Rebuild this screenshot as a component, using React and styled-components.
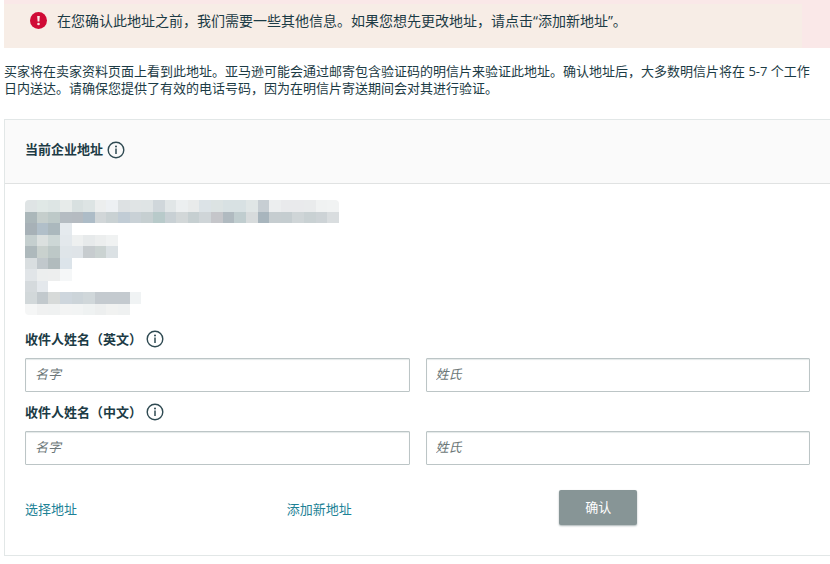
import React, { useState } from "react";
import styled, { createGlobalStyle } from "styled-components";

// cell colours of the hidden address, one array per row
const MOSAIC = [
  ["#dfe4e5", "#e0e8e6", "#dde5e4", "#e7ebea", "#d8e0e0", "#dde4e4", "#eceeee", "#edf0f3", "#dde1e3", "#e0e4e5", "#dfe4e5", "#d0d7db", "#e1e6e7", "#eceff0", "#e9ebeb", "#dce3e7", "#dce3e3", "#d8e1e3", "#d8e1e3", "#e0e6e6", "#c7ced3", "#eceeef", "#e9eaec", "#e9eaec", "#e9ebec", "#f0f2f2", "#f1f3f3"],
  ["#abb7ba", "#c5cecc", "#bdc9c8", "#b5bcc2", "#b5bbc1", "#adbcc7", "#d1d6d8", "#c9d1d3", "#c1ccd5", "#c9d1d6", "#c6cfd1", "#b8caca", "#c8d0d4", "#d2d7d8", "#c6cfd1", "#cfd5d8", "#c5c6ca", "#b0bac0", "#c0cdcf", "#d7dbdc", "#a8b5bd", "#c6cdd0", "#c5cdd0", "#cfd5d7", "#c9d1d3", "#cdd3d6", "#d9dddf"],
  ["#a7b1b7", "#b1bfc9", "#abb8bd", "#e5eaee"],
  ["#c5cfcf", "#dbe0df", "#cdd7d6", "#e3e8ec", "#eef0f0", "#e7eaeb", "#eceeee", "#f0f2f2"],
  ["#aeb9bc", "#c9d1ce", "#bdc8c7", "#dfe5e9", "#dfe4e8", "#c7cccf", "#cbd3d2", "#dbe1e4"],
  ["#d9dee0", "#c1c8cc", "#b1bbbd", "#dce4ea"],
  ["#e1e5e8", "#eceeee", "#edeeee", "#f5f7f8"],
  ["#d5dadd", "#e4e8ec"],
  ["#d2d8da", "#c2c9cd", "#d7dad9", "#ced6dd", "#ccd4d9", "#d0d7da", "#c4cacf", "#c4cacf", "#c4cacf", "#f0f3f4"],
  ["#f5f6f6", "#f0f1f1", "#eff1f1", "#f3f4f4", "#f2f4f4", "#eff2f2", "#edefef", "#f1f2f1", "#eff1f1"],
];

const NAME_GROUPS = [
  { id: "en", title: "收件人姓名（英文）" },
  { id: "cn", title: "收件人姓名（中文）" },
];

function InfoIcon() {
  return (
    <svg width="18" height="18" viewBox="0 0 18 18" fill="none">
      <circle cx="9" cy="9" r="7.8" stroke="#2f4a52" strokeWidth="1.4" />
      <circle cx="9" cy="5.4" r="1" fill="#2f4a52" />
      <path d="M9 7.6V13" stroke="#2f4a52" strokeWidth="1.5" />
    </svg>
  );
}

function AlertIcon() {
  return (
    <svg width="17" height="17" viewBox="0 0 17 17">
      <circle cx="8.5" cy="8.5" r="8.5" fill="#d00b36" />
      <path d="M7.2 4h2.6l-.4 5.4H7.6z" fill="#fbe9e9" />
      <circle cx="8.5" cy="12" r="1.3" fill="#fbe9e9" />
    </svg>
  );
}

function HiddenAddress() {
  return (
    <Mosaic viewBox="0 0 27 10" preserveAspectRatio="none" shapeRendering="crispEdges">
      {MOSAIC.map((row, y) =>
        row.map((color, x) => (
          <rect key={`${x}-${y}`} x={x} y={y} width="1" height="1" fill={color} />
        ))
      )}
    </Mosaic>
  );
}

function App() {
  const [values, setValues] = useState({});

  function handleChange(e) {
    setValues({ ...values, [e.target.name]: e.target.value });
  }

  return (
    <Page>
      <GlobalStyle />

      <Alert role="alert">
        <AlertIcon />
        <span>
          在您确认此地址之前，我们需要一些其他信息。如果您想先更改地址，请点击“添加新地址”。
        </span>
      </Alert>

      <Description>
        买家将在卖家资料页面上看到此地址。亚马逊可能会通过邮寄包含验证码的明信片来验证此地址。确认地址后，大多数明信片将在 5-7 个工作日内送达。请确保您提供了有效的电话号码，因为在明信片寄送期间会对其进行验证。
      </Description>

      <Card>
        <CardHeader>
          <Title>当前企业地址</Title>
          <InfoButton type="button" aria-label="当前企业地址">
            <InfoIcon />
          </InfoButton>
        </CardHeader>

        <CardBody>
          <HiddenAddress />

          {NAME_GROUPS.map(({ id, title }) => (
            <NameGroup key={id}>
              <LabelRow>
                <Label htmlFor={`first-${id}`}>{title}</Label>
                <InfoButton type="button" aria-label={title}>
                  <InfoIcon />
                </InfoButton>
              </LabelRow>
              <Fields>
                <Input
                  id={`first-${id}`}
                  name={`first-${id}`}
                  placeholder="名字"
                  value={values[`first-${id}`] || ""}
                  onChange={handleChange}
                />
                <Input
                  name={`last-${id}`}
                  aria-label="姓氏"
                  placeholder="姓氏"
                  value={values[`last-${id}`] || ""}
                  onChange={handleChange}
                />
              </Fields>
            </NameGroup>
          ))}

          <Actions>
            <Link href="#select">选择地址</Link>
            <Link href="#new">添加新地址</Link>
            <ButtonCell>
              <Button type="button">确认</Button>
            </ButtonCell>
          </Actions>
        </CardBody>
      </Card>
    </Page>
  );
}

const GlobalStyle = createGlobalStyle`
  * {
    box-sizing: border-box;
  }

  body {
    margin: 0;
    background: #fff;
    color: #1c3b45;
    font-family: "Open Sans", "Noto Sans CJK SC", sans-serif;
    font-size: 13px;
    line-height: 17px;
  }
`;

const Page = styled.main`
  padding-left: 4px;
`;

const Alert = styled.div`
  display: flex;
  align-items: flex-start;
  gap: 10px;
  min-height: 48px;
  padding: 12px 26px 0;
  background: linear-gradient(#f7ede6, #f7ede6) 0 4px / calc(100% - 28px) 100% no-repeat #fae8e8;
  font-size: 14px;
`;

const Description = styled.p`
  margin: 15px 0 22px;
  padding-right: 8px;
`;

const Card = styled.section`
  border: 1px solid #e2e7e7;
  border-right: none;
`;

const CardHeader = styled.header`
  display: flex;
  align-items: center;
  gap: 4px;
  height: 64px;
  padding: 0 20px 4px;
  border-bottom: 1px solid #e0e2e2;
  background: #fafafa;
`;

const Title = styled.h2`
  margin: 0;
  font-size: 13px;
  font-weight: bold;
`;

const InfoButton = styled.button`
  display: flex;
  padding: 0;
  border: none;
  background: none;
  cursor: pointer;
`;

const CardBody = styled.div`
  padding: 16px 20px 30px;
`;

const Mosaic = styled.svg`
  display: block;
  width: 314px;
  height: 115px;
  margin-bottom: 14px;
  border-radius: 4px;
`;

const NameGroup = styled.div`
  margin-bottom: 10px;
`;

const LabelRow = styled.div`
  display: flex;
  align-items: center;
  gap: 4px;
  height: 20px;
  margin-bottom: 9px;
`;

const Label = styled.label`
  font-weight: bold;
`;

const Fields = styled.div`
  display: grid;
  grid-template-columns: 1fr 1fr;
  gap: 16px;
`;

const Input = styled.input`
  width: 100%;
  height: 34px;
  padding: 0 9px 2px;
  border: 1px solid #bcc5c6;
  border-radius: 1px;
  background: #fff;
  box-shadow: inset 0 1px 1px #e3e8e8;
  color: inherit;
  font: inherit;

  &::placeholder {
    color: #6c7778;
    font-style: italic;
    opacity: 1;
  }
`;

const Actions = styled.div`
  display: grid;
  grid-template-columns: 1fr 1fr 1fr;
  align-items: center;
  margin-top: 25px;
`;

const Link = styled.a`
  padding-top: 4px;
  color: #1d8296;
  text-decoration: none;
`;

const ButtonCell = styled.div`
  padding-left: 11px;
`;

const Button = styled.button`
  display: block;
  width: 78px;
  height: 35px;
  padding: 0;
  border: none;
  border-radius: 2px;
  background: #879596;
  box-shadow: 0 1px 2px #aab4b5;
  color: #fff;
  font: inherit;
  cursor: pointer;
`;

export default App;
